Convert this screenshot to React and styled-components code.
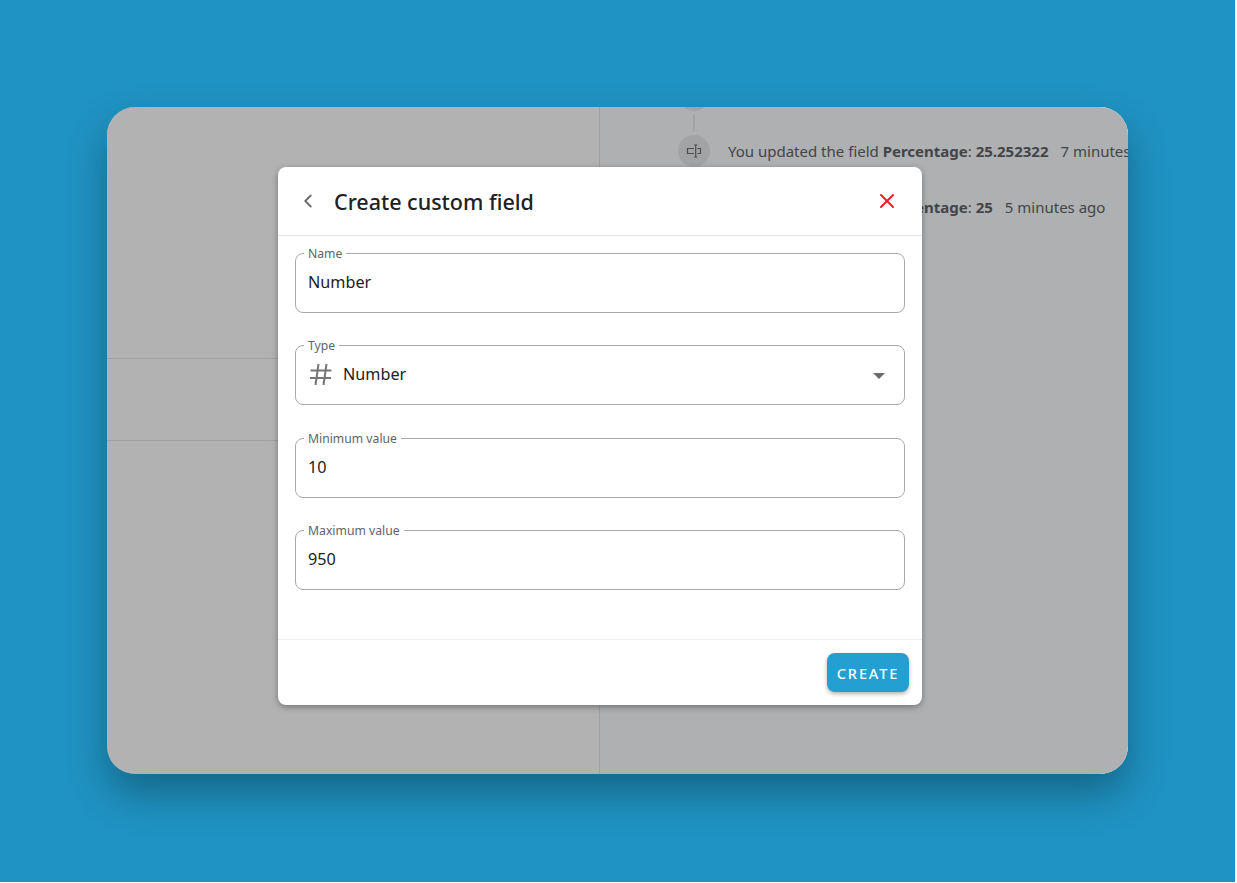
import React from 'react'
import styled, { createGlobalStyle } from 'styled-components'
import { ChevronLeft, X } from 'lucide-react'

const GlobalStyle = createGlobalStyle`
  html, body {
    margin: 0;
    padding: 0;
    background: #fff;
  }
  * {
    box-sizing: border-box;
  }
`

const Stage = styled.div`
  width: 1235px;
  height: 882px;
  padding-top: 107px;
  padding-left: 107px;
  background: #1f93c3;
  font-family: "Noto Sans", "Open Sans", sans-serif;
`

const FrameShadow = styled.div`
  width: 1021px;
  height: 667px;
  border-radius: 28px;
  box-shadow: 0 20px 40px rgba(0, 0, 0, 0.3);
`

const Frame = styled.div`
  position: relative;
  width: 1021px;
  height: 667px;
  border-radius: 28px;
  overflow: hidden;
  background: #fff;
  display: flex;
`

const LeftPane = styled.div`
  flex: none;
  width: 493px;
  padding-top: 251px;
  border-right: 1px solid #e6e6e6;
`

const LeftRow = styled.div`
  height: 82px;
  border-top: 1px solid #e6e6e6;
`

const RightPane = styled.div`
  flex: 1;
  min-width: 0;
  padding-left: 78px;
  margin-top: -28px;
  background: #fbfcfe;
  white-space: nowrap;
`

const Activity = styled.div`
  display: flex;
  align-items: center;
  height: 32px;
  font-size: 15px;
  color: #5f6368;
`

const ActivityIcon = styled.div`
  flex: none;
  width: 32px;
  height: 32px;
  margin-right: 18px;
  border-radius: 50%;
  background: #e8eaed;
  color: #6a6d72;
  display: flex;
  align-items: center;
  justify-content: center;
`

const Connector = styled.div`
  width: 2px;
  height: 18px;
  margin: 3px 0 3px 15px;
  background: #e8eaed;
`

const Time = styled.span`
  margin-left: 12px;
`

const Overlay = styled.div`
  position: absolute;
  inset: 0;
  padding: 60px 0 0 171px;
  background: rgba(0, 0, 0, 0.3);
`

const Modal = styled.div`
  width: 644px;
  height: 538px;
  background: #fff;
  border-radius: 8px;
  box-shadow: 0 2px 6px rgba(0, 0, 0, 0.35);
  display: flex;
  flex-direction: column;
`

const ModalHeader = styled.div`
  display: flex;
  align-items: center;
  height: 69px;
  padding: 0 23px 0 19px;
  border-bottom: 1px solid #e4e5e7;
`

const BackButton = styled.div`
  display: flex;
  color: #6b6b6b;
  margin-right: 15px;
`

const Title = styled.div`
  flex: 1;
  font-size: 21.5px;
  font-weight: 500;
  color: #202124;
`

const ModalBody = styled.div`
  flex: 1;
  padding: 17px 17px 0;
  display: flex;
  flex-direction: column;
  gap: 32.3px;
`

const Field = styled.div`
  position: relative;
  height: 60px;
  padding: 0 12px 2px;
  border: 1px solid #a9a9a9;
  border-radius: 8px;
  display: flex;
  align-items: center;
  font-size: 16.2px;
  color: #202124;
`

const FieldLabel = styled.span`
  position: absolute;
  top: -7px;
  left: 8px;
  padding: 0 4px;
  background: #fff;
  font-size: 12.2px;
  line-height: 13px;
  color: #5f6368;
`

const HashIcon = styled.svg`
  width: 24px;
  height: 24px;
  margin-left: 1px;
  margin-right: 10px;
  color: #757575;
`

const Caret = styled.span`
  position: absolute;
  right: 19px;
  top: 27px;
  width: 0;
  height: 0;
  border-left: 6px solid transparent;
  border-right: 6px solid transparent;
  border-top: 6px solid #6b6b6b;
`

const ModalFooter = styled.div`
  height: 66px;
  padding: 13px 13px 0 0;
  border-top: 1px solid #eeeff0;
  display: flex;
  justify-content: flex-end;
`

const CreateButton = styled.button`
  width: 82px;
  height: 39px;
  border: none;
  border-radius: 8px;
  background: #249fd2;
  box-shadow: 0 2px 4px rgba(0, 0, 0, 0.3);
  color: #fff;
  font-family: inherit;
  font-size: 14.5px;
  font-weight: 500;
  letter-spacing: 1.9px;
`

const Hash = () => (
  <HashIcon viewBox="0 0 24 24" fill="none" stroke="currentColor" strokeWidth="2">
    <path d="M9.5 2 6.5 23M17.5 2 14.5 23M1.5 8.5h21M1 16h21" />
  </HashIcon>
)

const FieldIcon = () => (
  <svg width="16" height="16" viewBox="0 0 16 16" fill="none" stroke="currentColor" strokeWidth="1.2">
    <path d="M8 5.5H1.5v5H8M11.5 5.5H14.5v5h-3M9.7 2v12M8 2h3.4M8 14h3.4" />
  </svg>
)

const Row = ({ label, value, time }) => (
  <Activity>
    <ActivityIcon><FieldIcon /></ActivityIcon>
    <span>You updated the field <b>{label}</b>: <b>{value}</b></span>
    <Time>{time}</Time>
  </Activity>
)

export default function App() {
  return (
    <Stage>
      <GlobalStyle />
      <FrameShadow>
        <Frame>
          <LeftPane>
            <LeftRow />
            <LeftRow />
          </LeftPane>
          <RightPane>
            <ActivityIcon />
            <Connector />
            <Row label="Percentage" value="25.252322" time="7 minutes ago" />
            <Connector />
            <Row label="Percentage" value="25" time="5 minutes ago" />
          </RightPane>
          <Overlay>
            <Modal>
              <ModalHeader>
                <BackButton><ChevronLeft size={22} strokeWidth={2} /></BackButton>
                <Title>Create custom field</Title>
                <X size={24} color="#ee1c25" strokeWidth={2} />
              </ModalHeader>
              <ModalBody>
                <Field><FieldLabel>Name</FieldLabel>Number</Field>
                <Field><FieldLabel>Type</FieldLabel><Hash />Number<Caret /></Field>
                <Field><FieldLabel>Minimum value</FieldLabel>10</Field>
                <Field><FieldLabel>Maximum value</FieldLabel>950</Field>
              </ModalBody>
              <ModalFooter>
                <CreateButton>CREATE</CreateButton>
              </ModalFooter>
            </Modal>
          </Overlay>
        </Frame>
      </FrameShadow>
    </Stage>
  )
}
